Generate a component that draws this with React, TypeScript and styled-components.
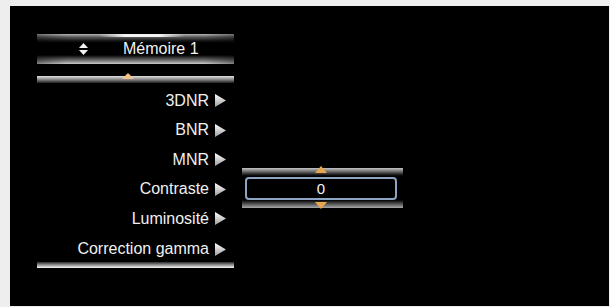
import styled, { createGlobalStyle } from "styled-components";

const GlobalStyle = createGlobalStyle`
  html, body {
    margin: 0;
    padding: 0;
    background: #eeeeee;
  }
  body {
    font-family: "Liberation Sans", Arial, sans-serif;
  }
`;

const Screen = styled.div`
  margin: 6px 0 0 10px;
  width: 599px;
  height: 300px;
  background: #000;
  display: flex;
  align-items: flex-start;
`;

const LeftColumn = styled.div`
  margin-left: 27px;
  padding-top: 28px;
  width: 197px;
  display: flex;
  flex-direction: column;
`;

const MemoryBar = styled.div`
  position: relative;
  height: 30px;
  display: flex;
  align-items: center;
  padding-left: 42px;
  gap: 35px;
  color: #f2f2f2;
  font-size: 16px;
  background:
    linear-gradient(to right, rgba(0, 0, 0, 0.35), rgba(0, 0, 0, 0) 15%, rgba(0, 0, 0, 0) 85%, rgba(0, 0, 0, 0.35)),
    linear-gradient(
      to bottom,
      #b8b8b8 0px,
      #5a5a5a 3px,
      #111 7px,
      #000 9px,
      #000 21px,
      #2a2a2a 23px,
      #6a6a6a 26px,
      #b0b0b0 29px,
      #cfcfcf 30px
    );

  &::before {
    content: "";
    position: absolute;
    top: 0;
    left: 62px;
    width: 86px;
    height: 3px;
    background: linear-gradient(to right, rgba(255, 255, 255, 0), #f4f4f4 30%, #f4f4f4 70%, rgba(255, 255, 255, 0));
  }
`;

const SliderBar = styled.div`
  position: relative;
  margin-top: 12px;
  height: 7px;
  background: linear-gradient(to bottom, #e0e0e0, #9a9a9a 40%, #4a4a4a 80%, #1a1a1a);
`;

const SliderMark = styled.div`
  position: absolute;
  left: 85px;
  top: -3px;
  width: 0;
  height: 0;
  border-left: 6px solid transparent;
  border-right: 6px solid transparent;
  border-bottom: 6px solid #f0c48a;
`;

const Menu = styled.div`
  margin-top: 3px;
  display: flex;
  flex-direction: column;
`;

const MenuItem = styled.div<{ $last?: boolean }>`
  height: ${(p) => (p.$last ? "25px" : "29.5px")};
  padding-top: ${(p) => (p.$last ? "3px" : "0")};
  display: flex;
  align-items: center;
  justify-content: flex-end;
  gap: 6px;
  padding-right: 8px;
  color: #f0f0f0;
  font-size: 16px;
`;

const BottomBar = styled.div`
  margin-top: 0.5px;
  height: 6px;
  background: linear-gradient(to bottom, #2a2a2a, #8a8a8a 45%, #dcdcdc 85%, #f4f4f4);
`;

const ValuePanel = styled.div`
  position: relative;
  margin: 162px 0 0 8px;
  width: 161px;
  height: 40px;
  background: linear-gradient(
    to bottom,
    #c4c4c4 0px,
    #7a7a7a 3px,
    #2a2a2a 6px,
    #000 8px,
    #000 32px,
    #2a2a2a 34px,
    #6a6a6a 37px,
    #aaaaaa 40px
  );
`;

const ValueBox = styled.div`
  position: absolute;
  left: 3px;
  top: 9px;
  width: 152px;
  height: 23px;
  box-sizing: border-box;
  border: 2px solid #8ea4c4;
  border-radius: 4px;
  background: #000;
  color: #f4f4f4;
  font-size: 15px;
  display: flex;
  align-items: center;
  justify-content: center;
`;

const Caret = styled.div<{ $down?: boolean }>`
  position: absolute;
  left: 73px;
  top: ${(p) => (p.$down ? "34px" : "-2px")};
  width: 0;
  height: 0;
  border-left: 6px solid transparent;
  border-right: 6px solid transparent;
  ${(p) =>
    p.$down
      ? "border-top: 7px solid #e9a64e;"
      : "border-bottom: 7px solid #e9a64e;"}
`;

function UpDownIcon() {
  return (
    <svg width="9" height="12" viewBox="0 0 9 12">
      <polygon points="4.5,0 9,5 0,5" fill="#f4f4f4" />
      <polygon points="0,7 9,7 4.5,12" fill="#f4f4f4" />
    </svg>
  );
}

function Arrow() {
  return (
    <svg width="11" height="13" viewBox="0 0 11 13">
      <defs>
        <linearGradient id="arrowFill" x1="0" y1="0" x2="0" y2="1">
          <stop offset="0" stopColor="#ffffff" />
          <stop offset="1" stopColor="#9c9c9c" />
        </linearGradient>
      </defs>
      <polygon points="0,0 11,6.5 0,13" fill="url(#arrowFill)" />
    </svg>
  );
}

const items = ["3DNR", "BNR", "MNR", "Contraste", "Luminosité", "Correction gamma"];

export default function App() {
  return (
    <>
      <GlobalStyle />
      <Screen>
        <LeftColumn>
          <MemoryBar>
            <UpDownIcon />
            <span>Mémoire 1</span>
          </MemoryBar>
          <SliderBar>
            <SliderMark />
          </SliderBar>
          <Menu>
            {items.map((label, i) => (
              <MenuItem key={label} $last={i === items.length - 1}>
                <span>{label}</span>
                <Arrow />
              </MenuItem>
            ))}
          </Menu>
          <BottomBar />
        </LeftColumn>
        <ValuePanel>
          <Caret />
          <ValueBox>0</ValueBox>
          <Caret $down />
        </ValuePanel>
      </Screen>
    </>
  );
}
